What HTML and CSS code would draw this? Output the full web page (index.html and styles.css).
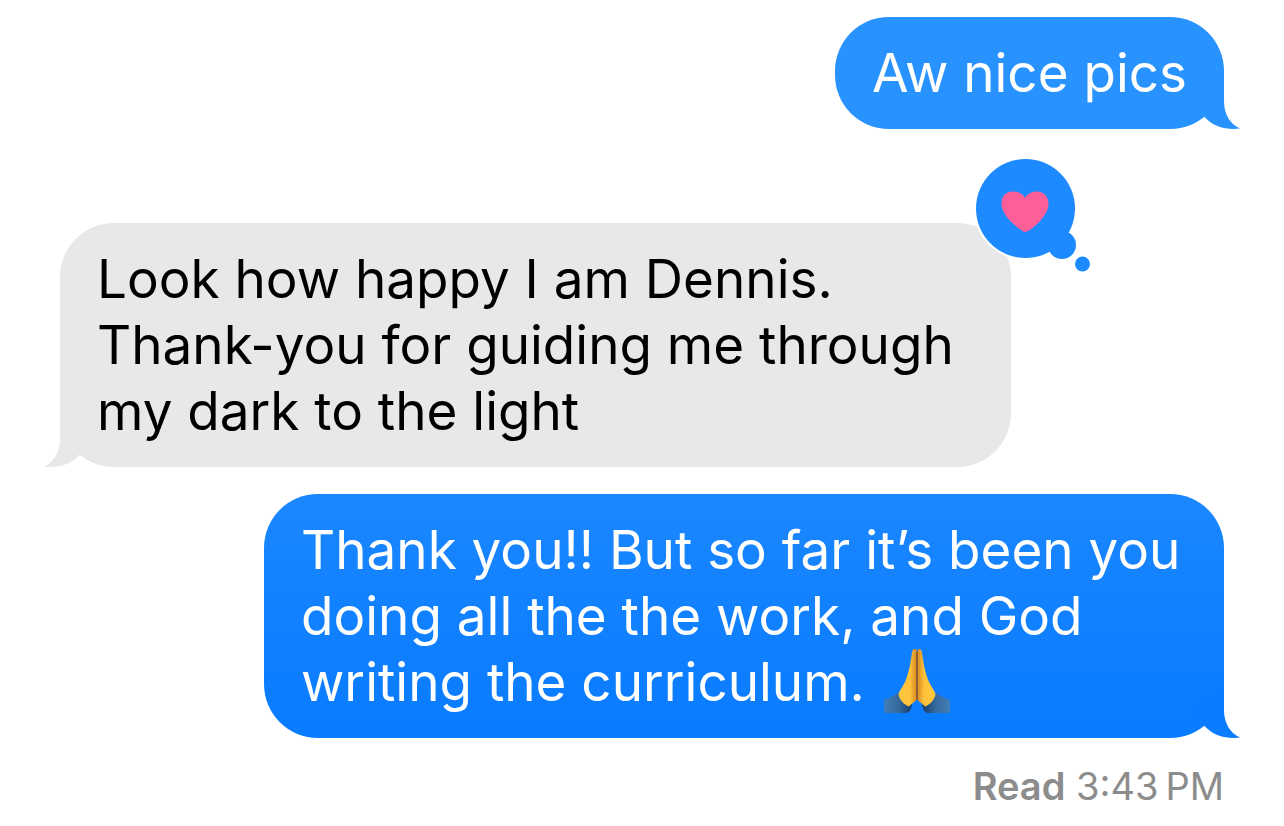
FILE: index.html
```
<!DOCTYPE html>
<html lang="en">
<head>
<meta charset="utf-8">
<meta name="viewport" content="width=device-width, initial-scale=1">
<title>Messages</title>
<link rel="stylesheet" href="styles.css">
</head>
<body>
<main class="thread">
  <article class="bubble sent light">
    <p class="text">Aw nice pics</p>
    <svg class="tail" viewBox="0 0 72 56" aria-hidden="true"><path d="M56 0V28C56 41 62 51 72 55.6C58 57 46 54 37 44.500L20 20Z"/></svg>
  </article>
  <article class="bubble received">
    <p class="text">Look how happy I am Dennis. Thank-you for guiding me through my dark to the light</p>
    <svg class="tail" viewBox="0 0 72 56" aria-hidden="true"><path d="M56 0V28C56 41 62 51 72 55.6C58 57 46 54 37 44.500L20 20Z"/></svg>
    <svg class="reaction" viewBox="0 0 120 120" role="img" aria-label="Loved">
      <circle class="halo" cx="52.500" cy="51.500" r="51.500"/>
      <g class="cloud"><circle cx="52.500" cy="51.500" r="49.500"/><circle cx="89" cy="88" r="14"/><circle cx="109.500" cy="107" r="7.500"/></g>
      <path class="heart" d="M52.500 75C49 75 29 60 28.500 48C28 39 33 34.500 40 34.500C46 34.500 50 37 52 41C54 37 59 34.500 64 34.500C71 34.500 76 40 75.500 48C75 60 56 75 52.500 75Z"/>
    </svg>
  </article>
  <article class="bubble sent deep">
    <p class="text">Thank you!! But so far it’s been you doing all the the work, and God writing the curriculum. <svg class="emoji" viewBox="0 0 66 66" role="img" aria-label="Folded hands">
      <defs>
        <linearGradient id="skin" x1="0" x2="1"><stop offset="0" stop-color="#ffc83c"/><stop offset=".65" stop-color="#ffc13b"/><stop offset="1" stop-color="#d98a20"/></linearGradient>
        <linearGradient id="cuff" x1="0" x2="1"><stop offset="0" stop-color="#407fb8"/><stop offset=".55" stop-color="#35679b"/><stop offset="1" stop-color="#163c67"/></linearGradient>
        <g id="hand">
          <path fill="url(#cuff)" d="M0 52C7 50 11 46 16 44L28 57L26 63L23 65H0Z"/>
          <path fill="url(#skin)" d="M32.500 1.500C30 0 28.500 1.500 28 5C26 18 25 24 21 34C19 38 16 42 14.500 46C15 51 20 57 25 58.500C28 55 31 54 32.500 52Z"/>
        </g>
      </defs>
      <use href="#hand"/><use href="#hand" transform="matrix(-1 0 0 1 66 0)"/>
      <path d="M33 4V52" stroke="#9a5414" stroke-width="1.500"/>
      <path d="M30 9C30 24 29 32 28 40M36 9C36 24 37 32 38 40" fill="none" stroke="#e9a52c" stroke-width="1"/>
    </svg></p>
    <svg class="tail" viewBox="0 0 72 56" aria-hidden="true"><path d="M56 0V28C56 41 62 51 72 55.6C58 57 46 54 37 44.500L20 20Z"/></svg>
  </article>
  <footer class="receipt"><strong>Read</strong> <time datetime="15:43">3:43&#8239;PM</time></footer>
</main>
</body>
</html>
```
FILE: styles.css
```
* {
  box-sizing: border-box;
}

body {
  margin: 0;
  background: #fff;
  font-family: Inter, "Liberation Sans", sans-serif;
}

.thread {
  display: flex;
  flex-direction: column;
  padding: 17px 60px 16px;
}

.bubble {
  position: relative;
  max-width: 960px;
  padding: 23px 37px;
  border-radius: 54px;
  font-size: 53px;
  line-height: 66px;
}

.text {
  margin: 0;
}

.sent {
  align-self: flex-end;
  color: #fff;
}

.light {
  background: #2893ff;
  fill: #2893ff;
}

.deep {
  margin-top: 27px;
  background: linear-gradient(#1b87ff, #0a7cff 90%);
  fill: #0a7cff;
}

.received {
  align-self: flex-start;
  max-width: 951px;
  margin-top: 94px;
  background: #e8e8ea;
  fill: #e8e8ea;
  color: #000;
}

.tail {
  position: absolute;
  right: -16px;
  bottom: 0;
  width: 72px;
  height: 56px;
}

.received .tail {
  right: auto;
  left: -16px;
  transform: scaleX(-1);
}

.reaction {
  position: absolute;
  top: -66px;
  right: -82px;
  width: 120px;
  height: 120px;
}

.halo {
  fill: #fff;
}

.cloud {
  fill: #1e8aff;
}

.heart {
  fill: #ff5f98;
}

.emoji {
  width: 66px;
  height: 66px;
  margin: -4px 0 -4px 4px;
  vertical-align: -9px;
}

.receipt {
  align-self: flex-end;
  margin-top: 24px;
  color: #8c8c8c;
  font-size: 38px;
  line-height: 48px;
}

.receipt strong {
  font-weight: 600;
}
```
